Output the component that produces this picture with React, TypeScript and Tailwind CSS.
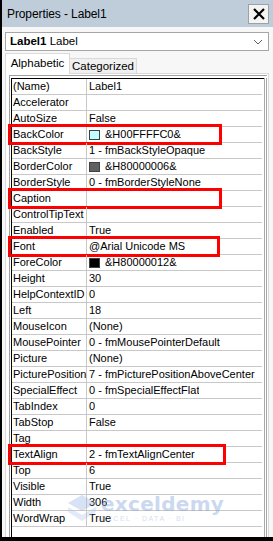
import React from "react";

type Row = {
    name: string;
    value?: string;
    swatch?: string;
    box?: string;
};

const rows: Row[] = [
    { name: "(Name)", value: "Label1" },
    { name: "Accelerator" },
    { name: "AutoSize", value: "False" },
    { name: "BackColor", value: "&H00FFFFC0&", swatch: "bg-[#c0ffff]", box: "w-[214px]" },
    { name: "BackStyle", value: "1 - fmBackStyleOpaque" },
    { name: "BorderColor", value: "&H80000006&", swatch: "bg-[#606060]" },
    { name: "BorderStyle", value: "0 - fmBorderStyleNone" },
    { name: "Caption", box: "w-[214px]" },
    { name: "ControlTipText" },
    { name: "Enabled", value: "True" },
    { name: "Font", value: "@Arial Unicode MS", box: "w-[212px]" },
    { name: "ForeColor", value: "&H80000012&", swatch: "bg-black" },
    { name: "Height", value: "30" },
    { name: "HelpContextID", value: "0" },
    { name: "Left", value: "18" },
    { name: "MouseIcon", value: "(None)" },
    { name: "MousePointer", value: "0 - fmMousePointerDefault" },
    { name: "Picture", value: "(None)" },
    { name: "PicturePosition", value: "7 - fmPicturePositionAboveCenter" },
    { name: "SpecialEffect", value: "0 - fmSpecialEffectFlat" },
    { name: "TabIndex", value: "0" },
    { name: "TabStop", value: "False" },
    { name: "Tag" },
    { name: "TextAlign", value: "2 - fmTextAlignCenter", box: "w-[218px]" },
    { name: "Top", value: "6" },
    { name: "Visible", value: "True" },
    { name: "Width", value: "306" },
    { name: "WordWrap", value: "True" },
];

function PropRow({ row }: { row: Row }) {
    return (
        <div className="relative flex h-[16px] border-b border-[#c8c8c8] leading-[15px]">
            <div className="w-[75px] shrink-0 border-r border-[#c8c8c8] pl-[1px] whitespace-nowrap overflow-hidden">
                {row.name}
            </div>
            <div className="flex items-center pl-[2px] whitespace-nowrap overflow-hidden">
                {row.swatch && (
                    <span className={`mr-[5px] h-[10px] w-[11px] border border-[#404040] ${row.swatch}`} />
                )}
                {row.value}
            </div>
            {/* red highlight frame */}
            {row.box && (
                <div className={`absolute -left-[4px] -top-[3px] h-[21px] border-[3px] border-[#ff0000] ${row.box}`} />
            )}
        </div>
    );
}

export default function App() {
    return (
        <div className="relative h-[541px] w-[273px] overflow-hidden border-b-4 border-l-2 border-black bg-[#f7f7f7] font-['Liberation_Sans',Arial,sans-serif] text-[11px] text-black">
            {/* Title bar */}
            <div className="flex h-[27px] items-center justify-between bg-[#bfcddb] pl-[5px] pr-[4px]">
                <span className="text-[12px] tracking-[-0.1px]">Properties - Label1</span>
                <div className="flex h-[20px] w-[21px] items-center justify-center border border-[#a0a0a0] bg-[#f4f4f4]">
                    <svg width="14" height="14" viewBox="0 0 14 14">
                        <path d="M2 2 L12 12 M12 2 L2 12" stroke="#000" strokeWidth="2.2" />
                    </svg>
                </div>
            </div>

            {/* Object dropdown */}
            <div className="ml-[3px] mr-[4px] mt-[5px] flex h-[19px] items-center justify-between border border-[#a6a6a6] bg-white pl-[4px] pr-[5px] text-[11.5px]">
                <span>
                    <b>Label1</b> Label
                </span>
                <svg width="10" height="6" viewBox="0 0 10 6">
                    <path d="M1 1 L5 5 L9 1" fill="none" stroke="#606060" strokeWidth="1" />
                </svg>
            </div>

            {/* Tabs */}
            <div className="ml-[3px] mt-[2px] flex h-[20px] items-end text-[11.5px]">
                <div className="relative z-10 -mb-px flex h-[21px] w-[65px] items-center justify-center border border-b-0 border-[#d9d9d9] bg-white">
                    Alphabetic
                </div>
                <div className="flex h-[15px] w-[67px] items-center justify-center border border-b-0 border-l-0 border-[#d9d9d9] bg-[#f0f0f0] pt-[1px]">
                    Categorized
                </div>
            </div>

            {/* Grid panel */}
            <div className="ml-[3px] mr-[4px] h-[466px] border border-[#d9d9d9] bg-white pl-[3px] pr-[1px] pt-[1px]">
                <div className="h-full border-l border-t border-[#a0a0a0] pl-[1px] pt-[2px]">
                    <div className="h-full border-r-[3px] border-double border-[#a8a8a8]">
                        <div className="h-full border-l border-t border-black pr-[2px]">
                            {rows.map((r) => (
                                <PropRow key={r.name} row={r} />
                            ))}
                        </div>
                    </div>
                </div>
            </div>

            {/* Watermark */}
            <div className="pointer-events-none absolute left-[64px] top-[494px] flex items-center gap-[3px] opacity-40">
                <svg width="32" height="28" viewBox="0 0 32 28">
                    <path d="M16 1 L30 9 L16 17 L2 9 Z" fill="#9db7e4" />
                    <path d="M2 13 L16 21 L30 13 L30 18 L16 27 L2 18 Z" fill="#b8cbee" />
                </svg>
                <div className="flex flex-col leading-none">
                    <span className="font-['DejaVu_Sans',sans-serif] text-[20px] font-bold tracking-[0.3px] text-[#7f9fd8]">exceldemy</span>
                    <span className="mt-[1px] text-[7px] tracking-[1.5px] text-[#9ab0dc]">EXCEL · DATA · BI</span>
                </div>
            </div>
        </div>
    );
}
